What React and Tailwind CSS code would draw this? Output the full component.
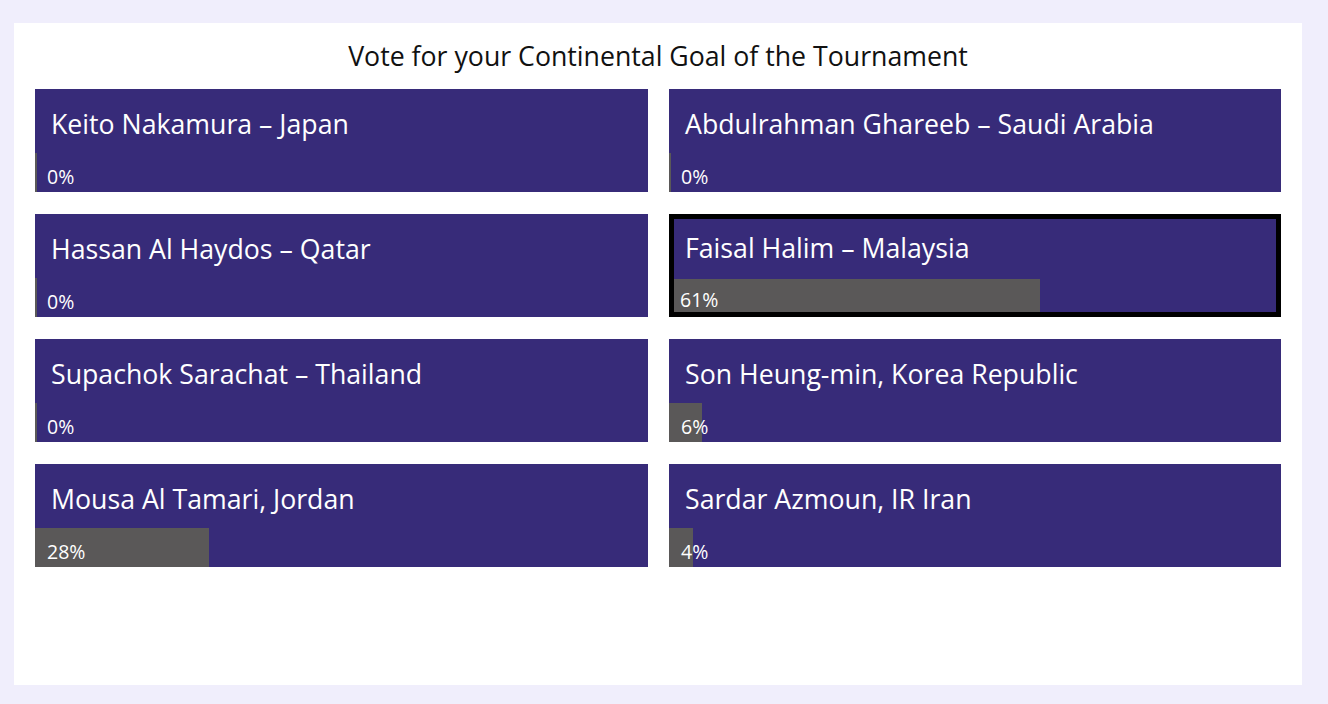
const nominees = [
  { name: 'Keito Nakamura – Japan', pct: 0 },
  { name: 'Abdulrahman Ghareeb – Saudi Arabia', pct: 0 },
  { name: 'Hassan Al Haydos – Qatar', pct: 0 },
  { name: 'Faisal Halim – Malaysia', pct: 61, fill: 60.8, selected: true },
  { name: 'Supachok Sarachat – Thailand', pct: 0 },
  { name: 'Son Heung-min, Korea Republic', pct: 6, fill: 5.4 },
  { name: 'Mousa Al Tamari, Jordan', pct: 28, fill: 28.4 },
  { name: 'Sardar Azmoun, IR Iran', pct: 4, fill: 4 },
];

const VoteCard = ({ name, pct, fill = 0, selected }) => (
  <div
    className={`flex h-[103px] flex-col justify-between bg-[#372b79] ${
      selected ? 'border-[5px] border-black' : ''
    }`}
  >
    <div
      className={`text-[26.7px] leading-[36px] text-white ${
        selected ? 'pl-[11px] pt-[11px]' : 'pl-4 pt-[17px]'
      }`}
    >
      {name}
    </div>
    <div className={`relative ${selected ? 'h-[33px]' : 'h-[39px]'}`}>
      <div
        className="h-full min-w-[2px] bg-[#5a5858]"
        style={{ width: `${fill}%` }}
      />
      <span
        className={`absolute text-[19.5px] leading-[24px] text-white ${
          selected ? 'bottom-0 left-[6px]' : 'bottom-[3px] left-3'
        }`}
      >
        {pct}%
      </span>
    </div>
  </div>
);

export default function App() {
  return (
    <div
      className="min-h-[704px] bg-[#f0eefc] pl-[14px] pt-[23px]"
      style={{ fontFamily: '"Open Sans", "Noto Sans", sans-serif' }}
    >
      <div className="h-[662px] w-[1288px] bg-white px-[21px] pt-[13px]">
        <h1 className="mb-[13px] text-center text-[26.7px] leading-[40px] text-[#111]">
          Vote for your Continental Goal of the Tournament
        </h1>
        <div className="grid grid-cols-[613px_612px] gap-x-[21px] gap-y-[22px]">
          {nominees.map((n, i) => (
            <VoteCard key={i} {...n} />
          ))}
        </div>
      </div>
    </div>
  );
}
